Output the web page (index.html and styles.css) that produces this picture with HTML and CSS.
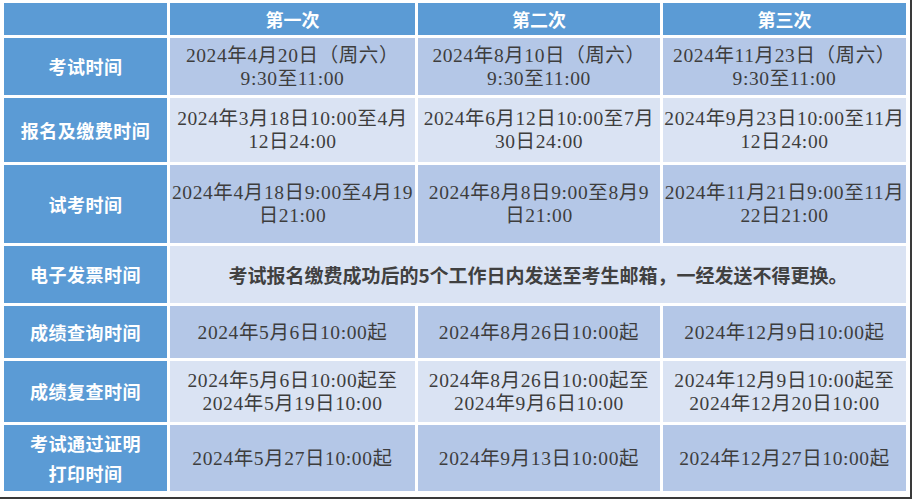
FILE: index.html
```html
<!DOCTYPE html>
<html lang="zh-CN">
<head>
<meta charset="utf-8">
<title>考试时间安排</title>
<link rel="stylesheet" href="styles.css">
</head>
<body>
<div class="frame">
  <div class="grid">
    <div class="cell head"></div>
    <div class="cell head">第一次</div>
    <div class="cell head">第二次</div>
    <div class="cell head">第三次</div>

    <div class="cell label">考试时间</div>
    <div class="cell mid">2024年4月20日（周六）<br>9:30至11:00</div>
    <div class="cell mid">2024年8月10日（周六）<br>9:30至11:00</div>
    <div class="cell mid">2024年11月23日（周六）<br>9:30至11:00</div>

    <div class="cell label">报名及缴费时间</div>
    <div class="cell light">2024年3月18日10:00至4月<br>12日24:00</div>
    <div class="cell light">2024年6月12日10:00至7月<br>30日24:00</div>
    <div class="cell light">2024年9月23日10:00至11月<br>12日24:00</div>

    <div class="cell label">试考时间</div>
    <div class="cell mid">2024年4月18日9:00至4月19<br>日21:00</div>
    <div class="cell mid">2024年8月8日9:00至8月9<br>日21:00</div>
    <div class="cell mid">2024年11月21日9:00至11月<br>22日21:00</div>

    <div class="cell label">电子发票时间</div>
    <div class="cell light wide">考试报名缴费成功后的5个工作日内发送至考生邮箱，一经发送不得更换。</div>

    <div class="cell label">成绩查询时间</div>
    <div class="cell mid">2024年5月6日10:00起</div>
    <div class="cell mid">2024年8月26日10:00起</div>
    <div class="cell mid">2024年12月9日10:00起</div>

    <div class="cell label">成绩复查时间</div>
    <div class="cell light">2024年5月6日10:00起至<br>2024年5月19日10:00</div>
    <div class="cell light">2024年8月26日10:00起至<br>2024年9月6日10:00</div>
    <div class="cell light">2024年12月9日10:00起至<br>2024年12月20日10:00</div>

    <div class="cell label tall">考试通过证明<br>打印时间</div>
    <div class="cell mid">2024年5月27日10:00起</div>
    <div class="cell mid">2024年9月13日10:00起</div>
    <div class="cell mid">2024年12月27日10:00起</div>
  </div>
</div>
</body>
</html>
```

FILE: styles.css
```css
html, body {
  margin: 0;
  padding: 0;
  background: #ffffff;
}

.frame {
  width: 910px;
  height: 497px;
  border-right: 2px solid #3a3a3a;
  border-bottom: 2px solid #3a3a3a;
  box-sizing: content-box;
}

.grid {
  display: grid;
  grid-template-columns: 163px 245px 242px 243px;
  grid-template-rows: 32px 57px 64px 78px 57px 52px 61px 66px;
  gap: 3px;
  padding: 3px 0 0 4px;
}

.cell {
  display: flex;
  align-items: center;
  justify-content: center;
  text-align: center;
  font-family: "Liberation Serif", "Noto Sans CJK SC", serif;
  font-size: 19.5px;
  line-height: 23px;
  letter-spacing: 0.6px;
  color: #3d3d3d;
}

.head {
  background: #5b9bd5;
  color: #ffffff;
  font-family: "Noto Sans CJK SC", sans-serif;
  font-weight: 700;
  font-size: 18px;
  letter-spacing: 0;
}

.label {
  background: #5b9bd5;
  color: #ffffff;
  font-family: "Noto Sans CJK SC", sans-serif;
  font-weight: 700;
  font-size: 18px;
  letter-spacing: 0.5px;
}

.label.tall {
  line-height: 30px;
}

.mid {
  background: #b4c7e7;
}

.light {
  background: #dae3f3;
}

.wide {
  grid-column: span 3;
  font-family: "Noto Sans CJK SC", sans-serif;
  font-weight: 700;
  font-size: 19px;
  letter-spacing: 0;
  color: #404040;
}
```
